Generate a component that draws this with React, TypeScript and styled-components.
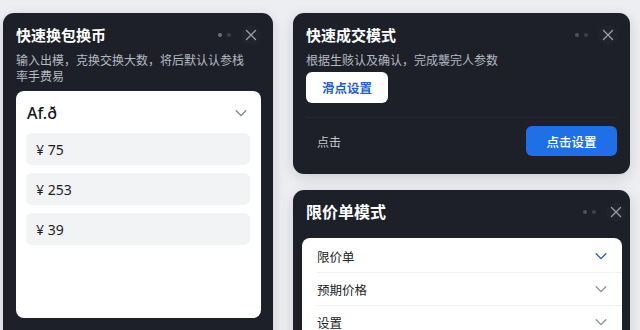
import React from "react";
import styled, { createGlobalStyle } from "styled-components";

const GlobalStyle = createGlobalStyle`
  body {
    margin: 0;
    background: #eceef1;
    font-family: "Noto Sans CJK SC", "Noto Sans", sans-serif;
  }
`;

const amounts = ["¥ 75", "¥ 253", "¥ 39"];
const limitRows = [
  { label: "限价单", active: true },
  { label: "预期价格", active: false },
  { label: "设置", active: false },
];

function Chevron({ color }: { color: string }) {
  return (
    <svg width="14" height="14" viewBox="0 0 16 16">
      <polyline
        points="2.5,5.5 8,11 13.5,5.5"
        fill="none"
        stroke={color}
        strokeWidth="1.5"
        strokeLinecap="round"
        strokeLinejoin="round"
      />
    </svg>
  );
}

function PanelControls({ dim }: { dim?: boolean }) {
  return (
    <Controls>
      <Dot $color={dim ? "#4f535b" : "#6c7078"} />
      <Dot $color="#3d4149" />
      <CloseButton>
        <svg width="12" height="12" viewBox="0 0 12 12">
          <path
            d="M1.5 1.5 L10.5 10.5 M10.5 1.5 L1.5 10.5"
            stroke="#9a9ea6"
            strokeWidth="1.3"
            strokeLinecap="round"
          />
        </svg>
      </CloseButton>
    </Controls>
  );
}

export default function App() {
  return (
    <>
      <GlobalStyle />
      <Page>
        <LeftPanel>
          <Header>
            <Title>快速换包换币</Title>
            <PanelControls />
          </Header>
          <Subtitle>输入出模，克换交换大数，将后默认认参栈率手费易</Subtitle>
          <CurrencyCard>
            <CardHead>
              <CardHeading>Af.ð</CardHeading>
              <Chevron color="#7d8189" />
            </CardHead>
            <AmountList>
              {amounts.map((a) => (
                <AmountRow key={a}>{a}</AmountRow>
              ))}
            </AmountList>
          </CurrencyCard>
        </LeftPanel>

        <RightColumn>
          <QuickPanel>
            <Header>
              <Title>快速成交模式</Title>
              <PanelControls dim />
            </Header>
            <Subtitle>根据生赅认及确认，完成襲完人参数</Subtitle>
            <LightButton>滑点设置</LightButton>
            <Divider />
            <Footer>
              <FooterLabel>点击</FooterLabel>
              <PrimaryButton>点击设置</PrimaryButton>
            </Footer>
          </QuickPanel>

          <LimitPanel>
            <Header>
              <Title $size={16}>限价单模式</Title>
              <PanelControls dim />
            </Header>
            <OptionCard>
              {limitRows.map((r) => (
                <OptionRow key={r.label}>
                  <OptionLabel>{r.label}</OptionLabel>
                  <Chevron color={r.active ? "#2557b5" : "#8a8e95"} />
                </OptionRow>
              ))}
            </OptionCard>
          </LimitPanel>
        </RightColumn>
      </Page>
    </>
  );
}

const Page = styled.div`
  display: grid;
  grid-template-columns: 270px 337px;
  column-gap: 20px;
  padding: 13px 0 0 3px;
  height: 330px;
  box-sizing: border-box;
  overflow: hidden;
`;

const Panel = styled.div`
  background: #1d2029;
  border-radius: 11px;
  box-shadow: 0 4px 14px rgba(20, 25, 40, 0.14);
  color: #fff;
`;

const LeftPanel = styled(Panel)`
  height: 340px;
  padding: 10px 12px 0 13px;
  box-sizing: border-box;
`;

const RightColumn = styled.div`
  display: flex;
  flex-direction: column;
  gap: 16px;
`;

const QuickPanel = styled(Panel)`
  height: 161px;
  padding: 10px 12px 0 13px;
  box-sizing: border-box;
  display: flex;
  flex-direction: column;
  align-items: flex-start;
`;

const LimitPanel = styled(Panel)`
  height: 160px;
  padding: 10px 8px 0 9px;
  box-sizing: border-box;

  & > div:first-child {
    padding: 0 4px 0 4px;
  }
`;

const Header = styled.div`
  display: flex;
  align-items: center;
  justify-content: space-between;
  width: 100%;
  height: 23px;
`;

const Title = styled.div<{ $size?: number }>`
  font-size: ${(p) => p.$size ?? 15}px;
  font-weight: 700;
  line-height: 23px;
  color: #ffffff;
`;

const Controls = styled.div`
  display: flex;
  align-items: center;
  gap: 5px;
`;

const Dot = styled.span<{ $color: string }>`
  width: 4px;
  height: 4px;
  border-radius: 50%;
  background: ${(p) => p.$color};
`;

const CloseButton = styled.div`
  width: 20px;
  height: 20px;
  margin-left: 5px;
  border-radius: 50%;
  background: rgba(255, 255, 255, 0.02);
  display: flex;
  align-items: center;
  justify-content: center;
`;

const Subtitle = styled.div`
  margin-top: 6px;
  font-size: 12px;
  line-height: 16px;
  color: #b4b8c0;
  width: 232px;
`;

const CurrencyCard = styled.div`
  margin-top: 7px;
  height: 227px;
  background: #ffffff;
  border-radius: 8px;
  padding: 10px 11px 0 10px;
  box-sizing: border-box;
`;

const CardHead = styled.div`
  display: flex;
  align-items: center;
  justify-content: space-between;
  height: 24px;
  padding: 0 2px 0 1px;
`;

const CardHeading = styled.div`
  font-family: "Noto Sans", sans-serif;
  font-size: 16px;
  font-weight: 500;
  color: #141518;
`;

const AmountList = styled.div`
  display: flex;
  flex-direction: column;
  gap: 8px;
  margin-top: 8px;
`;

const AmountRow = styled.div`
  height: 32px;
  display: flex;
  align-items: center;
  padding-left: 10px;
  background: #f2f3f5;
  border-radius: 6px;
  font-family: "Noto Sans", sans-serif;
  font-size: 14px;
  color: #1e2024;
`;

const LightButton = styled.div`
  margin-top: 4px;
  width: 82px;
  height: 31px;
  border-radius: 6px;
  background: #ffffff;
  color: #2460c4;
  font-size: 12.5px;
  font-weight: 700;
  display: flex;
  align-items: center;
  justify-content: center;
`;

const Divider = styled.div`
  margin-top: 14px;
  width: 100%;
  height: 1px;
  background: rgba(255, 255, 255, 0.03);
`;

const Footer = styled.div`
  width: 100%;
  display: flex;
  align-items: center;
  justify-content: space-between;
  padding-top: 8px;
  padding-left: 11px;
  box-sizing: border-box;
`;

const FooterLabel = styled.span`
  font-size: 12px;
  color: #c3c6cc;
`;

const PrimaryButton = styled.div`
  width: 91px;
  height: 30px;
  border-radius: 6px;
  background: #1f6fe6;
  color: #ffffff;
  font-size: 12.5px;
  font-weight: 500;
  display: flex;
  align-items: center;
  justify-content: center;
  margin-right: 1px;
`;

const OptionCard = styled.div`
  margin-top: 15px;
  background: #ffffff;
  border-radius: 8px;
  padding-top: 2px;
  height: 120px;
`;

const OptionRow = styled.div`
  margin-left: 15px;
  padding-right: 14px;
  height: 32px;
  display: flex;
  align-items: center;
  justify-content: space-between;
  border-bottom: 1px solid #f0f1f3;
`;

const OptionLabel = styled.span`
  font-size: 12.5px;
  color: #202226;
`;
